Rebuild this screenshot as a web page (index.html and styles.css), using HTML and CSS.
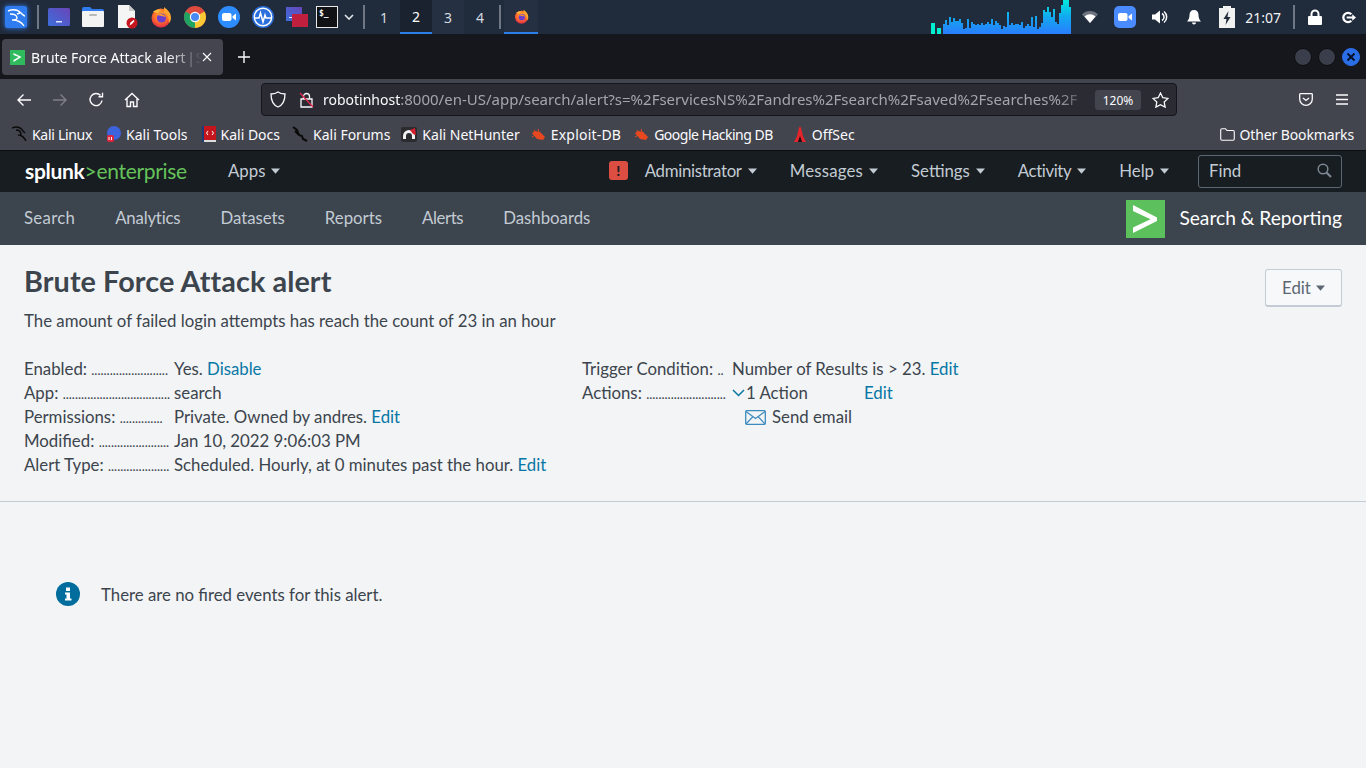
FILE: index.html
```html
<!DOCTYPE html>
<html>
<head>
  <meta charset="utf-8">
  <title>Brute Force Attack alert | Splunk</title>
  <link rel="stylesheet" href="styles.css">
</head>
<body>
  <svg class="defs" width="0" height="0">
    <defs>
      <radialGradient id="foxFill" cx="50%" cy="35%" r="70%">
        <stop offset="0" stop-color="#ffb52e"/><stop offset=".55" stop-color="#ff6a2b"/><stop offset="1" stop-color="#d91f4c"/>
      </radialGradient>
      <linearGradient id="graphFill" x1="0" y1="0" x2="0" y2="1">
        <stop offset="0" stop-color="#00ebdc"/><stop offset=".5" stop-color="#12a8f0"/><stop offset="1" stop-color="#2a7dff"/>
      </linearGradient>
      <linearGradient id="deskFill" x1="0" y1="1" x2="1" y2="0">
        <stop offset="0" stop-color="#3b6fdc"/><stop offset="1" stop-color="#6a45b8"/>
      </linearGradient>
      <symbol id="firefox" viewBox="0 0 22 22">
        <circle cx="11" cy="12" r="9.5" fill="url(#foxFill)"/>
        <path d="M14 1c4 3 7 6 7 11 0 2-1 4-2 5 0-5-2-9-5-11z" fill="#ffa62e"/>
        <path d="M3 6c2-2 5-3 8-2-2 1-3 2-3 3z" fill="#ffbd3a"/>
        <circle cx="11.5" cy="12" r="4.6" fill="#6a3fd0"/>
        <path d="M7 9c3-2 7-1 9 2-3-1-6-1-9-2z" fill="#ff9a2a"/>
      </symbol>
      <symbol id="zoomcam" viewBox="0 0 22 22">
        <rect x="4" y="7" width="9.5" height="8" rx="2" fill="#fff"/>
        <path d="M14.5 10.2 18 7.6v6.8l-3.500-2.600z" fill="#fff"/>
      </symbol>
      <symbol id="caret" viewBox="0 0 9 6"><path d="M0 .5h9L4.500 5.800z" fill="currentColor"/></symbol>
    </defs>
  </svg>

  <div class="taskbar">
    <div class="kali-btn">
      <svg width="22" height="22" viewBox="0 0 22 22"><rect width="22" height="22" rx="2" fill="#2f7bf0"/><path d="M3 5c5-2 10-1 13 2 2 2 3 3 4 3M5 8c4 0 7 1 7 4 0 2-3 2-5 2M7 14c5 0 9 1 12 6M12 8l3-1" fill="none" stroke="#fff" stroke-width="1.400"/></svg>
    </div>
    <i class="task-sep"></i>
    <div class="launcher">
      <span class="task-icon"><svg width="22" height="18" viewBox="0 0 22 18"><rect width="22" height="18" rx="1.500" fill="url(#deskFill)"/><rect x="8" y="13" width="6" height="1.500" fill="#dfe6ff"/></svg></span>
      <span class="task-icon"><svg width="22" height="20" viewBox="0 0 22 20"><path d="M0 2q0-2 2-2h6l2 2h10q2 0 2 2v2H0z" fill="#2f7bf0"/><rect y="4" width="22" height="16" rx="1" fill="#f3f3f3"/><rect x="7" y="7" width="8" height="2" rx="1" fill="#b9b9b9"/></svg></span>
      <span class="task-icon"><svg width="22" height="24" viewBox="0 0 22 24"><path d="M2 0h11l6 6v17H2z" fill="#f5f5f5"/><path d="M13 0l6 6h-6z" fill="#c9c9c9"/><circle cx="16" cy="18" r="5.500" fill="#c4161c"/><path d="M13.500 20.500l1-3 3-2.500 1 1-2.500 3z" fill="#fff"/></svg></span>
      <span class="task-icon"><svg width="22" height="22"><use href="#firefox"/></svg></span>
      <span class="task-icon">
        <svg width="22" height="22" viewBox="0 0 22 22"><circle cx="11" cy="11" r="11" fill="#dd4b3e"/><path d="M11 11 1.500 5.500A11 11 0 0 0 11 22z" fill="#1fa463"/><path d="M11 11V22A11 11 0 0 0 20.500 5.500z" fill="#fcc934"/><circle cx="11" cy="11" r="5.200" fill="#fff"/><circle cx="11" cy="11" r="4" fill="#4a8af4"/></svg>
      </span>
      <span class="task-icon"><svg width="22" height="22" viewBox="0 0 22 22"><circle cx="11" cy="11" r="11" fill="#2d8cff"/><use href="#zoomcam" width="22" height="22"/></svg></span>
      <span class="task-icon"><svg width="22" height="22" viewBox="0 0 22 22"><circle cx="11" cy="11" r="11" fill="#2a6fdc"/><circle cx="11" cy="11" r="8.700" fill="none" stroke="#fff" stroke-width="1.400"/><path d="M2.500 12H7l1.500-5 2.500 9 2-7 1 3h6" fill="none" stroke="#fff" stroke-width="1.500"/></svg></span>
      <span class="task-icon"><svg width="22" height="20" viewBox="0 0 22 20"><rect y="0" width="16" height="14" fill="url(#deskFill)"/><rect x="6" y="7" width="16" height="13" fill="#c0203d"/><rect x="3" y="10" width="3" height="1" fill="#dfe6ff"/></svg></span>
      <span class="term-icon">$_</span>
      <svg class="task-chevron" width="10" height="6" viewBox="0 0 10 6"><path d="M1 1l4 4 4-4" fill="none" stroke="#e4e7ea" stroke-width="1.600"/></svg>
    </div>
    <i class="task-sep"></i>
    <div class="pager">
      <span>1</span><span class="pager-on">2</span><span class="pager-mid">3</span><span>4</span>
    </div>
    <i class="task-sep"></i>
    <div class="window-btn"><svg width="15" height="15"><use href="#firefox"/></svg></div>

    <div class="tray">
      <svg class="graph" width="140" height="34" viewBox="0 0 140 34">
        <path d="M0 23h4v11H0zM6 28h4v6H6z" fill="#00f0d0"/>
        <path transform="translate(12 0)" fill="url(#graphFill)" d="M0 34V24h2V20h2V25h2V17h2V22h2V18h2V21h2V21h2V19h2V23h2V29h2V28h2V19h2V28h2V22h2V24h2V25h2V24h2V25h2V23h2V25h2V24h2V22h2V24h2V19h2V25h2V21h2V23h2V25h2V29h2V26h2V27h2V12h2V25h2V23h2V25h2V24h2V24h2V25h2V22h2V28h2V26h2V24h2V26h2V17h2V27h2V16h2V29h2V27h2V23h2V10h2V12h2V7h2V12h2V17h2V9h2V22h2V24h2V13h2V5h2V0h2V0h2V0h2V7h2V0h2V25h2V34z"/>
      </svg>
      <svg class="tray-icon" width="16" height="12" viewBox="0 0 16 12"><path d="M0 3.500a11 11 0 0 1 16 0L8 12z" fill="#6d7480"/><path d="M2.500 5.500a8 8 0 0 1 11 0L8 12z" fill="#fff"/></svg>
      <svg class="tray-icon" width="22" height="22" viewBox="0 0 22 22"><rect width="22" height="22" rx="5" fill="#4a8cff"/><use href="#zoomcam" width="22" height="22"/></svg>
      <svg class="tray-icon tray-wide" width="16" height="14" viewBox="0 0 16 14"><path d="M0 4.500h3L8 .5v13l-5-4H0z" fill="#fff"/><path d="M10 3.500a4 4 0 0 1 0 7M12 1.500a7 7 0 0 1 0 11" fill="none" stroke="#fff" stroke-width="1.500"/></svg>
      <svg class="tray-icon tray-bell" width="14" height="15" viewBox="0 0 14 15"><path d="M7 0c3 0 4.500 2 4.500 5 0 3 1 5 2.500 6.500H0C1.500 10 2.500 8 2.500 5 2.500 2 4 0 7 0z" fill="#fff"/><path d="M5 12.500h4a2 2 0 0 1-4 0z" fill="#fff"/></svg>
      <svg class="tray-battery" width="16" height="22" viewBox="0 0 16 22"><path d="M4 0h8v2h4v20H0V2h4z" fill="#f1f1f1"/><path d="M9.500 5 4.500 13h3l-1 6 5-8h-3z" fill="#222b38"/></svg>
      <span class="clock">21:07</span>
      <i class="task-sep"></i>
      <svg class="tray-lock" width="14" height="16" viewBox="0 0 14 16"><path d="M3.500 7V5a3.500 3.500 0 0 1 7 0v2" fill="none" stroke="#fff" stroke-width="2"/><rect y="7" width="14" height="9" rx="1" fill="#fff"/></svg>
      <svg class="tray-logout" width="14" height="13" viewBox="0 0 15 13"><path d="M10 3a5 5 0 1 0 0 7" fill="none" stroke="#fff" stroke-width="2.400"/><path d="M5 5.400h6V3l4 3.500-4 3.500V7.600H5z" fill="#fff"/></svg>
    </div>
  </div>

  <div class="tabstrip">
    <div class="tab">
      <span class="favicon"><svg width="15" height="15" viewBox="0 0 15 15"><rect width="15" height="15" fill="#2fbb5d"/><path d="M3.500 3 11.500 7 3.500 12V10L8.700 7 3.500 5z" fill="#fff"/></svg></span>
      <span class="tab-title">Brute Force Attack alert <span class="tab-rest">| S</span></span>
      <svg class="tab-close" width="10" height="10" viewBox="0 0 10 10"><path d="M1 1l8 8M9 1l-8 8" stroke="#fbfbfe" stroke-width="1.100"/></svg>
    </div>
    <svg class="tab-new" width="12" height="12" viewBox="0 0 12 12"><path d="M6 0v12M0 6h12" stroke="#fbfbfe" stroke-width="1.400"/></svg>
    <div class="win-controls">
      <i class="win-dot"></i><i class="win-dot"></i>
      <i class="win-dot win-close"><svg width="10" height="10" viewBox="0 0 10 10"><path d="M1.500 1.500l7 7M8.500 1.500l-7 7" stroke="#08122a" stroke-width="2"/></svg></i>
    </div>
  </div>

  <div class="toolbar">
    <div class="nav-btns">
      <svg width="16" height="14" viewBox="0 0 16 14"><path d="M15 7H2M7.500 1.500 2 7l5.500 5.500" fill="none" stroke="#fbfbfe" stroke-width="1.400"/></svg>
      <svg width="16" height="14" viewBox="0 0 16 14"><path d="M1 7h13M8.500 1.500 14 7l-5.500 5.500" fill="none" stroke="#7f7f87" stroke-width="1.400"/></svg>
      <svg width="16" height="16" viewBox="0 0 16 16"><path d="M14 8.500A6 6 0 1 1 12.500 3.500M14.500 .8v4h-4" fill="none" stroke="#fbfbfe" stroke-width="1.400"/></svg>
      <svg width="16" height="16" viewBox="0 0 16 16"><path d="M1 8 8 1.500 15 8M3 6.500V14.500h3.500V10h3v4.500H13V6.500" fill="none" stroke="#fbfbfe" stroke-width="1.400"/></svg>
    </div>
    <div class="urlbar">
      <svg width="16" height="17" viewBox="0 0 16 17"><path d="M8 1c2 1.500 4 2 7 2 0 6-2 11-7 13C3 14 1 9 1 3c3 0 5-.5 7-2z" fill="none" stroke="#fbfbfe" stroke-width="1.300"/></svg>
      <svg class="url-lock" width="15" height="16" viewBox="0 0 15 16"><path d="M4.500 7V4.500a3 3 0 0 1 6 0V7M2 7h11v8H2z" fill="none" stroke="#fbfbfe" stroke-width="1.300"/><path d="M1 1l13 14" stroke="#e22850" stroke-width="1.300"/></svg>
      <span class="url-text"><b>robotinhost</b>:8000/en-US/app/search/alert?s=%2FservicesNS%2Fandres%2Fsearch%2Fsaved%2Fsearches%2F</span>
      <span class="zoom-badge">120%</span>
      <svg width="17" height="16" viewBox="0 0 17 16"><path d="M8.500 1l2.300 4.700 5.200.7-3.800 3.600.9 5.100-4.600-2.400-4.600 2.400.9-5.100L1 6.400l5.200-.7z" fill="none" stroke="#fbfbfe" stroke-width="1.300"/></svg>
    </div>
    <div class="tool-right">
      <svg width="14" height="13" viewBox="0 0 14 13"><path d="M1.500.7h11q.8 0 .8.8v4.500a6.300 6.300 0 0 1-12.600 0V1.500q0-.8.8-.8zM4 5l3 2.500L10 5" fill="none" stroke="#fbfbfe" stroke-width="1.300"/></svg>
      <svg width="14" height="11" viewBox="0 0 14 11"><path d="M1 1h12M1 5.500h12M1 10h12" stroke="#fbfbfe" stroke-width="1.300"/></svg>
    </div>
  </div>

  <div class="bookmarks">
    <span class="bm bm-linux"><svg width="16" height="16" viewBox="0 0 16 16"><path d="M0 2c5-2 9 0 11 3l2 2M4 4c3 0 5 2 5 5M6 9c3 0 6 2 8 6" fill="none" stroke="#0b0b0b" stroke-width="1.500"/></svg>Kali Linux</span>
    <span class="bm bm-tools"><svg width="15" height="16" viewBox="0 0 15 16"><circle cx="8" cy="7" r="7" fill="#3d63dd"/><rect x="1" y="9" width="7" height="7" rx="2" fill="#e0263a"/><path d="M3 11v3M5.500 11v3" stroke="#fff"/></svg>Kali Tools</span>
    <span class="bm bm-docs"><svg width="14" height="16" viewBox="0 0 14 16"><rect x="1" y="0" width="13" height="14" fill="#c4161c"/><rect x="1" y="14" width="13" height="2" fill="#ddd"/><rect y="0" width="2" height="16" fill="#1c3b78"/><path d="M6 5 4.500 7 6 9M10 5l1.500 2L10 9" fill="none" stroke="#fff"/></svg>Kali Docs</span>
    <span class="bm"><svg width="16" height="16" viewBox="0 0 16 16"><path d="M1 1l4 3 2 5 3 1 1 3 4 2M3 5l4 4" fill="none" stroke="#0b0b0b" stroke-width="2"/></svg>Kali Forums</span>
    <span class="bm"><svg width="16" height="15" viewBox="0 0 16 15"><rect width="16" height="15" rx="2" fill="#2b2b30"/><path d="M2 9a6 6 0 0 1 12 0v3h-3V9a3 3 0 0 0-6 0v3H2z" fill="#f2f2f2"/><path d="M9 3l5-2 1 7-3-1z" fill="#d61f2c"/></svg>Kali NetHunter</span>
    <span class="bm bm-exploit"><svg width="15" height="13" viewBox="0 0 15 13"><path d="M1 5l3-2 5 1 5 5-2 3-6-1z" fill="#e8481f"/><path d="M3 2l2 3M7 1l1 3M1 9l3-2" stroke="#e8481f"/></svg>Exploit-DB</span>
    <span class="bm bm-ghdb"><svg width="15" height="13" viewBox="0 0 15 13"><path d="M1 5l3-2 5 1 5 5-2 3-6-1z" fill="#e8481f"/><path d="M3 2l2 3M7 1l1 3M1 9l3-2" stroke="#e8481f"/></svg>Google Hacking DB</span>
    <span class="bm"><svg width="14" height="17" viewBox="0 0 14 17"><path d="M7 0c2 3 2 7 3 10l3 6H1l3-6c1-3 1-7 3-10z" fill="#e0262c"/><path d="M5 16l2-6 2 6z" fill="#111"/></svg>OffSec</span>
    <span class="bm bm-other"><svg width="15" height="13" viewBox="0 0 15 13"><path d="M.7 2q0-1.300 1.300-1.300h3.500l1.500 1.800H13q1.300 0 1.300 1.300v7q0 1.500-1.300 1.500H2q-1.300 0-1.300-1.500z" fill="none" stroke="#fbfbfe" stroke-width="1.100"/></svg>Other Bookmarks</span>
  </div>

  <div class="splunk-bar">
    <div class="logo"><b>splunk</b><span class="logo-gt">&gt;</span><span>enterprise</span></div>
    <a class="menu menu-apps">Apps <svg width="9" height="6"><use href="#caret"/></svg></a>
    <div class="splunk-right">
      <span class="health">!</span>
      <a class="menu menu-admin">Administrator <svg width="9" height="6"><use href="#caret"/></svg></a>
      <a class="menu menu-msgs">Messages <svg width="9" height="6"><use href="#caret"/></svg></a>
      <a class="menu">Settings <svg width="9" height="6"><use href="#caret"/></svg></a>
      <a class="menu menu-activity">Activity <svg width="9" height="6"><use href="#caret"/></svg></a>
      <a class="menu menu-last">Help <svg width="9" height="6"><use href="#caret"/></svg></a>
      <div class="find">
        <span>Find</span>
        <svg width="15" height="15" viewBox="0 0 15 15"><circle cx="6" cy="6" r="4.800" fill="none" stroke="#7c8791" stroke-width="1.500"/><path d="M9.500 9.500 14 14" stroke="#7c8791" stroke-width="2.200"/></svg>
      </div>
    </div>
  </div>

  <div class="app-bar">
    <nav class="app-nav">
      <a class="nav-wide">Search</a><a class="nav-tight">Analytics</a><a>Datasets</a><a>Reports</a><a class="nav-tighter">Alerts</a><a>Dashboards</a>
    </nav>
    <div class="app-name">
      <svg width="39" height="38" viewBox="0 0 39 38"><rect width="39" height="38" fill="#5cc05c"/><path d="M7 5 31 17.500V21L7 33V27.500L24.500 19.300 7 11z" fill="#fff"/></svg>
      <span>Search &amp; Reporting</span>
    </div>
  </div>

  <main class="content">
    <section class="alert-head">
      <div class="title-row">
        <h1>Brute Force Attack alert</h1>
        <button class="edit-btn">Edit <svg width="9" height="6"><use href="#caret"/></svg></button>
      </div>
      <p class="desc">The amount of failed login attempts has reach the count of 23 in an hour</p>
      <div class="details">
        <dl class="col col-left">
          <div class="row"><dt>Enabled: <s>.........................</s></dt><dd>Yes. <a>Disable</a></dd></div>
          <div class="row"><dt>App: <s>...................................</s></dt><dd>search</dd></div>
          <div class="row"><dt>Permissions: <s>..............</s></dt><dd>Private. Owned by andres. <a>Edit</a></dd></div>
          <div class="row"><dt>Modified: <s>.......................</s></dt><dd>Jan 10, 2022 9:06:03 PM</dd></div>
          <div class="row"><dt>Alert Type: <s>....................</s></dt><dd>Scheduled. Hourly, at 0 minutes past the hour. <a>Edit</a></dd></div>
        </dl>
        <dl class="col">
          <div class="row"><dt>Trigger Condition: <s>..</s></dt><dd>Number of Results is &gt; 23. <a>Edit</a></dd></div>
          <div class="row"><dt>Actions: <s>..........................</s></dt><dd class="action-line"><svg width="13" height="8" viewBox="0 0 13 8"><path d="M1 1l5.500 5.500L12 1" fill="none" stroke="#0877a6" stroke-width="1.500"/></svg><span class="action-count">1 Action</span><a>Edit</a></dd></div>
          <div class="row"><dt></dt><dd class="action-item"><svg width="21" height="15" viewBox="0 0 21 15"><rect x=".7" y=".7" width="19.600" height="13.600" rx="1" fill="none" stroke="#3d8abf" stroke-width="1.300"/><path d="M1 1.500l9.500 7 9.500-7M1 14l7-7.500M20 14l-7-7.500" fill="none" stroke="#3d8abf" stroke-width="1.100"/></svg>Send email</dd></div>
        </dl>
      </div>
    </section>
    <div class="empty-msg">
      <svg width="24" height="24" viewBox="0 0 24 24"><circle cx="12" cy="12" r="12" fill="#006d9c"/><rect x="10" y="5.500" width="4" height="3.500" fill="#fff"/><path d="M9 10.500h5V16.500h1.500V18.500h-6.500V16.500h1.500V12.500H9z" fill="#fff"/></svg>
      <span>There are no fired events for this alert.</span>
    </div>
  </main>
</body>
</html>
```

FILE: styles.css
```css
* { box-sizing: border-box; }
html, body { margin: 0; height: 100%; }
body {
  background: #f2f4f5;
  color: #3c444d;
  font-family: "Lato", "Liberation Sans", sans-serif;
  overflow: hidden;
}
svg { display: block; flex: none; }
a { color: inherit; text-decoration: none; }
.defs { position: absolute; }

/* desktop panel */
.taskbar {
  display: flex;
  align-items: center;
  height: 35px;
  background: #202b3c;
  border-bottom: 1px solid #14171d;
  color: #e4e7ea;
  padding-left: 5px;
  font-family: "Noto Sans", sans-serif;
}
.kali-btn { width: 22px; height: 22px; box-shadow: 0 0 5px #2f7bf0; border-radius: 2px; }
.task-sep { display: block; width: 2px; height: 24px; background: #6f7784; flex: none; }
.kali-btn + .task-sep { margin-left: 10px; }
.launcher { display: flex; align-items: center; margin-left: 3px; }
.task-icon { width: 34px; display: flex; justify-content: center; }
.term-icon {
  width: 22px;
  height: 22px;
  margin-left: 2px;
  background: #101215;
  border: 1px solid #e8e8e8;
  color: #fff;
  font: bold 8px/10px "DejaVu Sans Mono", monospace;
  padding: 2px 0 0 2px;
}
.task-chevron { margin: 0 9px 0 6px; }
.pager { display: flex; height: 34px; margin: 0 3px; font-size: 14px; color: #d5dae0; }
.pager span { width: 32px; display: flex; align-items: center; justify-content: center; }
.pager .pager-on { background: #1a2230; border-bottom: 2px solid #2a7fe8; color: #fff; }
.pager .pager-mid { background: #253142; }
.window-btn {
  width: 34px;
  height: 34px;
  margin-left: 3px;
  background: #253142;
  border-bottom: 2px solid #2a7fe8;
  display: flex;
  align-items: center;
  justify-content: center;
}
.tray { display: flex; align-items: center; margin-left: auto; height: 34px; }
.graph { margin-right: 11px; }
.tray-icon { margin-right: 16px; }
.tray-icon.tray-wide { margin-right: 19px; }
.tray-icon.tray-bell { margin-right: 18px; }
.tray-battery { margin-right: 10px; }
.clock { font-size: 14px; color: #f0f2f4; margin-right: 12px; }
.tray .task-sep { margin-right: 13px; }
.tray-lock { margin-right: 20px; }
.tray-logout { margin-right: 10px; }

/* firefox chrome */
.tabstrip {
  display: flex;
  align-items: center;
  height: 44px;
  background: #16171c;
  padding-left: 2px;
  font-family: "Noto Sans", sans-serif;
}
.tab {
  display: flex;
  align-items: center;
  width: 221px;
  height: 36px;
  background: #44454e;
  border-radius: 4px;
  padding: 0 11px 0 8px;
  color: #fbfbfe;
  font-size: 14px;
}
.favicon { margin-right: 6px; }
.tab-title {
  flex: 1;
  min-width: 0;
  white-space: nowrap;
  -webkit-mask-image: linear-gradient(to right, #000 80%, transparent 100%);
  mask-image: linear-gradient(to right, #000 80%, transparent 100%);
}
.tab-rest { margin-left: -2px; letter-spacing: -1.4px; }
.tab-new { margin-left: 15px; }
.win-controls { display: flex; gap: 6px; margin-left: auto; margin-right: 6px; }
.win-dot { display: flex; align-items: center; justify-content: center; width: 18px; height: 18px; border-radius: 50%; background: #3a3e4a; border: 1px solid #0c0d10; }
.win-close { background: #2a6ee8; border-color: #2a6ee8; }

.toolbar {
  display: flex;
  align-items: center;
  height: 41px;
  background: #43454e;
  font-family: "Noto Sans", sans-serif;
}
.nav-btns { display: flex; align-items: center; gap: 20px; width: 261px; padding-left: 16px; }
.urlbar {
  display: flex;
  align-items: center;
  width: 916px;
  height: 33px;
  background: #2b2b33;
  border: 1px solid #16151b;
  border-radius: 4px;
  padding: 0 7px 0 8px;
  color: #a5a5ad;
  font-size: 15px;
}
.url-lock { margin-left: 13px; }
.url-text {
  flex: 1;
  margin-left: 9px;
  padding-bottom: 2px;
  white-space: nowrap;
  overflow: hidden;
  -webkit-mask-image: linear-gradient(to right, #000 96%, transparent 100%);
  mask-image: linear-gradient(to right, #000 96%, transparent 100%);
}
.url-text b { font-weight: 400; font-size: 14px; color: #fbfbfe; }
.zoom-badge {
  width: 46px;
  height: 20px;
  margin: 0 11px 0 6px;
  background: #43454e;
  border-radius: 3px;
  color: #fbfbfe;
  font-size: 12px;
  line-height: 21px;
  text-align: center;
}
.tool-right { display: flex; align-items: center; gap: 22px; margin-left: auto; margin-right: 17px; }

.bookmarks {
  display: flex;
  align-items: center;
  height: 30px;
  background: #43454e;
  padding: 0 0 2px 12px;
  color: #fbfbfe;
  font-family: "Noto Sans", sans-serif;
  font-size: 14px;
}
.bm { display: flex; align-items: center; gap: 5px; margin-right: 11px; white-space: nowrap; }
.bm-linux { gap: 4px; margin-right: 14px; letter-spacing: -.3px; }
.bm-tools { margin-right: 14px; }
.bm-docs { margin-right: 12px; }
.bm-exploit { margin-right: 13px; letter-spacing: .2px; }
.bm-ghdb { margin-right: 20px; letter-spacing: -.5px; }
.bm-other { margin-left: auto; margin-right: 12px; letter-spacing: -.13px; }

/* splunk header */
.splunk-bar {
  display: flex;
  align-items: center;
  height: 42px;
  background: #171d21;
  border-top: 1px solid #0c0f12;
  padding: 0 24px 2px 25px;
  font-size: 16.8px;
  color: #c3cbd4;
}
.logo { font-size: 21px; color: #65c25a; width: 203px; letter-spacing: -.3px; }
.logo b { color: #fff; font-weight: 700; }
.logo-gt { color: #65c25a; }
.menu { display: flex; align-items: center; gap: 6px; white-space: nowrap; }
.splunk-right { display: flex; align-items: center; margin-left: auto; }
.splunk-right .menu { margin-right: 33px; }
.splunk-right .menu-last { margin-right: 29px; }
.menu-admin { letter-spacing: -.3px; }
.menu-msgs { letter-spacing: .2px; }
.menu-activity { letter-spacing: -.4px; }
.health {
  width: 19px;
  height: 19px;
  margin-right: 17px;
  background: #dc4e41;
  border-radius: 3px;
  color: #171d21;
  font-weight: 900;
  font-size: 14px;
  line-height: 19px;
  text-align: center;
}
.find {
  display: flex;
  align-items: center;
  justify-content: space-between;
  width: 144px;
  height: 33px;
  margin-top: 2px;
  padding: 0 9px 2px 10px;
  border: 1px solid #5c6773;
  border-radius: 3px;
}
.app-bar {
  display: flex;
  align-items: center;
  justify-content: space-between;
  height: 53px;
  background: #3c444d;
  padding: 0 24px;
  color: #c3cbd4;
  font-size: 16.8px;
}
.app-nav { display: flex; gap: 40px; padding-bottom: 3px; }
.nav-wide { letter-spacing: .3px; }
.nav-tight { letter-spacing: -.2px; }
.nav-tighter { letter-spacing: -.4px; }
.app-name { display: flex; align-items: center; gap: 14px; color: #fff; font-size: 19.2px; }
.app-name span { padding-bottom: 3px; }

/* page */
.alert-head { height: 257px; padding: 24px 24px 0; border-bottom: 1px solid #c3cbd4; }
.title-row { display: flex; justify-content: space-between; align-items: flex-start; }
h1 { margin: 0; font-size: 28.8px; line-height: 24px; font-weight: 700; letter-spacing: .08px; }
.edit-btn {
  display: flex;
  align-items: center;
  justify-content: center;
  gap: 5px;
  width: 77px;
  height: 38px;
  background: #f7f8fa;
  border: 1px solid #c3cbd4;
  border-bottom-width: 2px;
  border-radius: 3px;
  color: #5c6773;
  font: inherit;
  font-size: 16.8px;
}
.desc { margin: 2px 0 0; font-size: 16.8px; line-height: 24px; }
.details { display: flex; margin-top: 24px; font-size: 16.8px; line-height: 24px; }
.col { margin: 0; }
.col-left { width: 558px; }
.row { display: flex; height: 24px; }
.row dt { width: 145px; margin-right: 5px; white-space: nowrap; }
.row dt s { text-decoration: none; font-size: 13px; }
.row dd { margin: 0; white-space: nowrap; }
.row a { color: #0877a6; }
.action-line { display: flex; align-items: center; }
.action-count { width: 118px; margin-left: 1px; }
.action-item { display: flex; align-items: center; gap: 6px; margin-left: 13px !important; }
.empty-msg {
  display: flex;
  align-items: center;
  gap: 21px;
  margin: 80px 0 0 56px;
  font-size: 16.8px;
}
```
